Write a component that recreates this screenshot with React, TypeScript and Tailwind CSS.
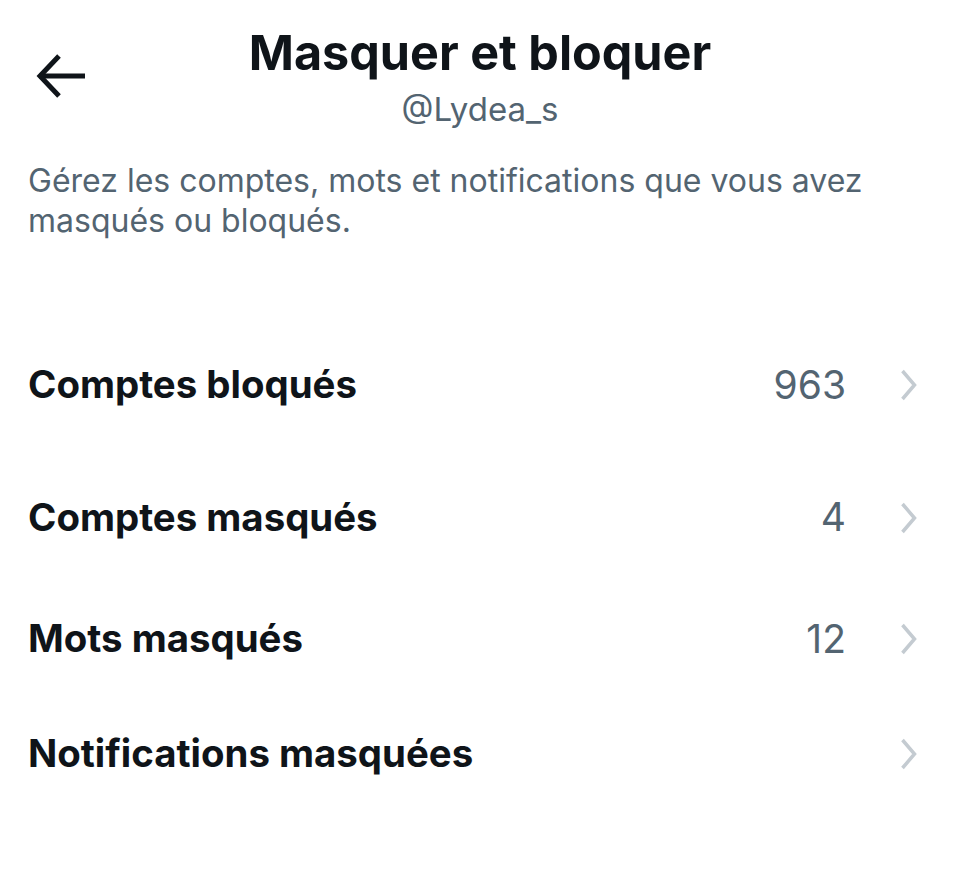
import React from 'react';

const rows = [
  { label: 'Comptes bloqués', count: '963', h: 'h-[130px]' },
  { label: 'Comptes masqués', count: '4', h: 'h-[135px]' },
  { label: 'Mots masqués', count: '12', h: 'h-[108px]' },
  { label: 'Notifications masquées', count: '', h: 'h-[122px]' },
];

const Chevron = () => (
  <svg width="18" height="32" viewBox="0 0 18 32" fill="none" className="shrink-0">
    <path d="M2.5 2 L14.5 16 L2.5 30" stroke="#c4cbd1" strokeWidth="3.5" />
  </svg>
);

export default function App() {
  return (
    <div className="w-[960px] h-[883px] bg-white text-[#0f1419] font-['Inter','Liberation_Sans',sans-serif] overflow-hidden">
      {/* Header */}
      <div className="relative pt-[23px]">
        <button className="absolute left-[35px] top-[53px]">
          <svg width="52" height="46" viewBox="0 0 52 46" fill="none">
            <path d="M4 23 H50" stroke="#0f1419" strokeWidth="5" />
            <path d="M24 3 L5 23 L24 43" stroke="#0f1419" strokeWidth="5" />
          </svg>
        </button>
        <h1 className="text-center text-[48.5px] leading-[60px] font-bold">Masquer et bloquer</h1>
        <p className="text-center text-[33px] leading-[44px] mt-[4px] text-[#536471]">@Lydea_s</p>
      </div>

      {/* Description */}
      <p className="px-[28px] mt-[30px] text-[32px] leading-[40px] text-[#536471]">
        Gérez les comptes, mots et notifications que vous avez masqués ou bloqués.
      </p>

      {/* Rows */}
      <div className="mt-[79px]">
        {rows.map((r) => (
          <div key={r.label} className={`flex items-center pl-[28px] pr-[42px] ${r.h}`}>
            <span className="flex-1 text-[38.4px] font-bold">{r.label}</span>
            <span className="text-[39px] text-[#536471] mr-[54px]">{r.count}</span>
            <Chevron />
          </div>
        ))}
      </div>
    </div>
  );
}
